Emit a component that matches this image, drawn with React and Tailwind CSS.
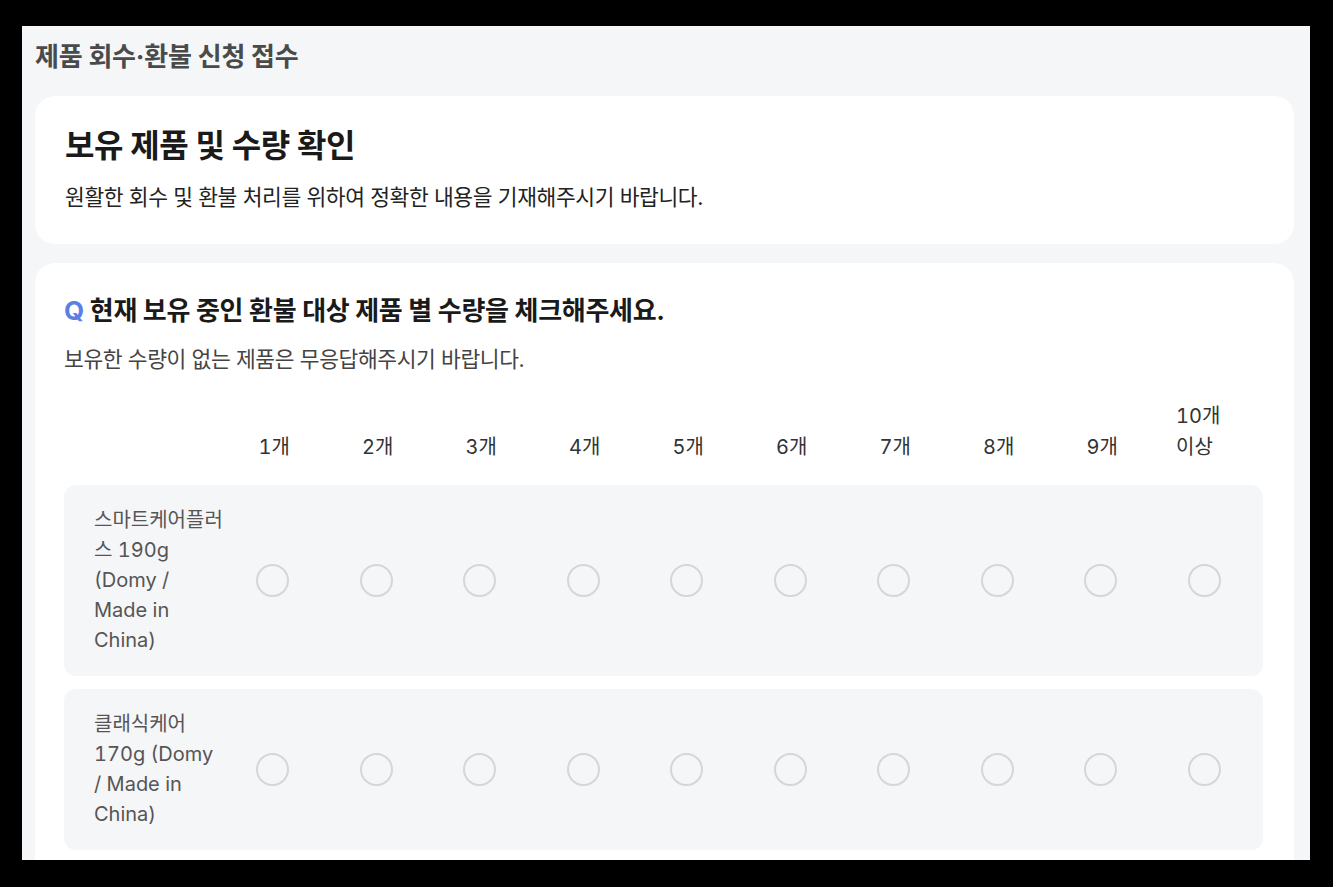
import React from "react";

const counts = ["1개", "2개", "3개", "4개", "5개", "6개", "7개", "8개", "9개"];

const products = [
  { id: "p1", lines: ["스마트케어플러", "스 190g", "(Domy /", "Made in", "China)"] },
  { id: "p2", lines: ["클래식케어", "170g (Domy", "/ Made in", "China)"] },
];

function Radio({ name }) {
  return (
    <div className="flex justify-center">
      <input
        type="radio"
        name={name}
        className="appearance-none block w-[33px] h-[33px] rounded-full border-[2.5px] border-[#d6d6d6] bg-transparent m-0"
      />
    </div>
  );
}

export default function App() {
  return (
    <div className="w-[1333px] h-[887px] bg-black pt-[26px] pl-[22px] font-['Inter','Noto_Sans_CJK_KR',sans-serif]">
      <div className="w-[1288px] h-[834px] overflow-hidden bg-[#f5f6f8] pl-[13px] pr-[16px] pt-[15px]">
        <h1 className="text-[26px] font-bold leading-[32px] tracking-[-0.2px] text-[#4a4a4a]">
          제품 회수·환불 신청 접수
        </h1>

        <div className="mt-[23px] rounded-[20px] bg-white pt-[32px] pb-[33px] px-[30px]">
          <h2 className="text-[32px] font-bold leading-[36px] tracking-[-0.4px] text-[#1a1a1a]">
            보유 제품 및 수량 확인
          </h2>
          <p className="mt-[19px] text-[21.5px] leading-[28px] tracking-[-0.4px] text-[#222]">
            원활한 회수 및 환불 처리를 위하여 정확한 내용을 기재해주시기 바랍니다.
          </p>
        </div>

        <div className="mt-[19px] rounded-[20px] bg-white pt-[31px] pl-[29px] pr-[31px] pb-[30px]">
          <h3 className="text-[26px] font-bold leading-[34px] tracking-[-0.3px] text-[#1a1a1a]">
            <span className="text-[#5b7fe3]">Q</span> 현재 보유 중인 환불 대상 제품 별 수량을 체크해주세요.
          </h3>
          <p className="mt-[17px] text-[21.5px] leading-[28px] tracking-[-0.4px] text-[#444]">
            보유한 수량이 없는 제품은 무응답해주시기 바랍니다.
          </p>

          <div className="mt-[28px] grid grid-cols-[157px_repeat(10,minmax(0,1fr))] pr-[7px] items-end text-[20px] leading-[31px] tabular-nums text-[#333]">
            <div />
            {counts.map((c) => (
              <div key={c} className="text-center pl-[3px]">
                {c}
              </div>
            ))}
            <div className="text-center pr-[12px]">
              <div className="inline-block text-left">
                10개
                <br />
                이상
              </div>
            </div>
          </div>

          <div className="mt-[22px] flex flex-col gap-[13px]">
            {products.map((p) => (
              <div
                key={p.id}
                className="grid grid-cols-[157px_repeat(10,minmax(0,1fr))] pr-[7px] items-center rounded-[12px] bg-[#f5f6f8] pt-[20px] pb-[21px]"
              >
                <div className="pl-[30px] text-[20px] leading-[30px] tabular-nums text-[#555]">
                  {p.lines.map((l, i) => (
                    <div key={i} className="whitespace-nowrap">
                      {l}
                    </div>
                  ))}
                </div>
                {Array.from({ length: 10 }).map((_, i) => (
                  <Radio key={i} name={p.id} />
                ))}
              </div>
            ))}
          </div>
        </div>
      </div>
    </div>
  );
}
